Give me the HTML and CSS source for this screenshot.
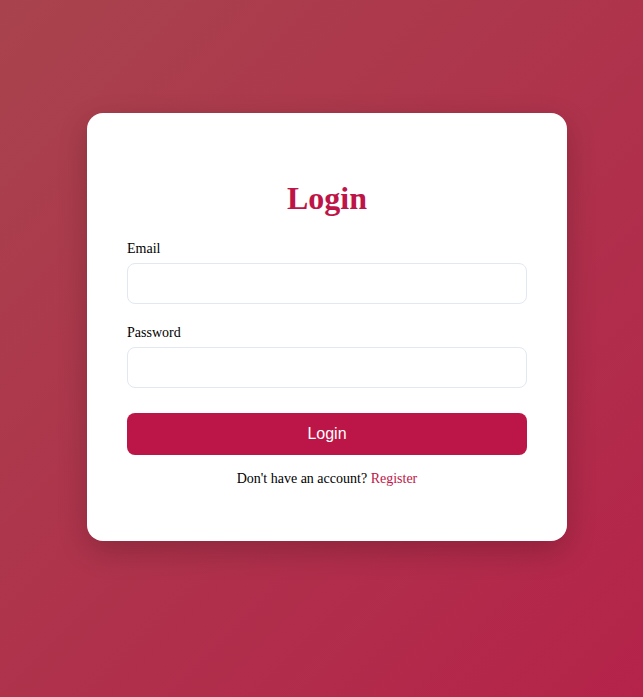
FILE: index.html
```html
<!DOCTYPE html>
<html lang="en">
<head>
<meta charset="utf-8">
<title>Login</title>
<link rel="stylesheet" href="styles.css">
</head>
<body>
<div class="page">
  <div class="card">
    <h1 class="title">Login</h1>
    <form class="form">
      <div class="field">
        <label class="label" for="email">Email</label>
        <input class="input" id="email" type="email">
      </div>
      <div class="field">
        <label class="label" for="password">Password</label>
        <input class="input" id="password" type="password">
      </div>
      <button class="btn" type="button">Login</button>
    </form>
    <p class="footer">Don't have an account? <a class="link" href="#">Register</a></p>
  </div>
</div>
</body>
</html>
```
FILE: styles.css
```css
html, body {
  margin: 0;
  height: 100%;
}
body {
  background: linear-gradient(135deg, #a8434d 0%, #b5234a 100%);
  font-family: "Liberation Serif", "Times New Roman", serif;
  color: #000;
}
.page {
  box-sizing: border-box;
  min-height: 100%;
  padding: 113px 0 0 87px;
}
.card {
  box-sizing: border-box;
  width: 480px;
  height: 428px;
  background: #fff;
  border-radius: 16px;
  padding: 67px 40px 40px;
  box-shadow: 0 10px 30px rgba(0, 0, 0, 0.2);
}
.title {
  margin: 0 0 24px;
  text-align: center;
  font-size: 32px;
  line-height: 37px;
  font-weight: bold;
  color: #be1548;
}
.form {
  margin: 0;
}
.field {
  margin-bottom: 21px;
}
.field + .field {
  margin-bottom: 25px;
}
.label {
  display: block;
  font-size: 14px;
  line-height: 16px;
  margin-bottom: 6px;
}
.input {
  display: block;
  box-sizing: border-box;
  width: 100%;
  height: 41px;
  border: 1px solid #e2e8f0;
  border-radius: 8px;
  padding: 0 12px;
  font-size: 14px;
  background: #fff;
  outline: none;
}
.btn {
  display: block;
  width: 100%;
  height: 42px;
  border: none;
  border-radius: 8px;
  background: #bc1547;
  color: #fff;
  font-family: "Liberation Sans", Arial, sans-serif;
  font-size: 16px;
  cursor: pointer;
}
.footer {
  margin: 15px 0 0;
  text-align: center;
  font-size: 14px;
  line-height: 17px;
}
.link {
  color: #be1548;
  text-decoration: none;
}
```
